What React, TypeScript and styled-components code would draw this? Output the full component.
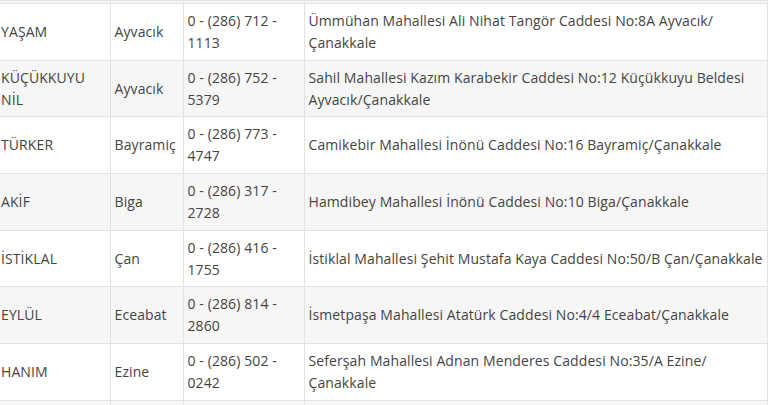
import React from "react";
import styled, { createGlobalStyle } from "styled-components";

const Global = createGlobalStyle`
  html, body { margin: 0; padding: 0; background: #fff; overflow: hidden; }
  body { width: 770px; height: 405px; }
`;

const Table = styled.table`
  width: 767px;
  border-collapse: collapse;
  table-layout: fixed;
  font-family: "Open Sans", "Noto Sans", sans-serif;
  font-size: 14px;
  letter-spacing: 0.1px;
  line-height: 22px;
  color: #444;
`;

const Row = styled.tr<{ $odd: boolean }>`
  background: ${(p) => (p.$odd ? "#f6f6f6" : "#ffffff")};
`;

const Cell = styled.td<{ $lead?: boolean }>`
  border: 1px solid #e2e2e2;
  border-left: ${(p) => (p.$lead ? "none" : "1px solid #e2e2e2")};
  padding: 5.85px 1px 5.85px ${(p) => (p.$lead ? "1px" : "4px")};
  vertical-align: middle;
  text-align: left;
  word-wrap: break-word;
`;

const StubCell = styled.td<{ $h: number; $lead?: boolean }>`
  border: 1px solid #e2e2e2;
  border-left: ${(p) => (p.$lead ? "none" : "1px solid #e2e2e2")};
  padding: 0;
  height: ${(p) => p.$h}px;
  line-height: 0;
`;

type Pharmacy = { name: string; district: string; phone: string; address: string };

const rows: Pharmacy[] = [
  { name: "YAŞAM", district: "Ayvacık", phone: "0 - (286) 712 - 1113", address: "Ümmühan Mahallesi Ali Nihat Tangör Caddesi No:8A Ayvacık/Çanakkale" },
  { name: "KÜÇÜKKUYU NİL", district: "Ayvacık", phone: "0 - (286) 752 - 5379", address: "Sahil Mahallesi Kazım Karabekir Caddesi No:12 Küçükkuyu Beldesi Ayvacık/Çanakkale" },
  { name: "TÜRKER", district: "Bayramiç", phone: "0 - (286) 773 - 4747", address: "Camikebir Mahallesi İnönü Caddesi No:16 Bayramiç/Çanakkale" },
  { name: "AKİF", district: "Biga", phone: "0 - (286) 317 - 2728", address: "Hamdibey Mahallesi İnönü Caddesi No:10 Biga/Çanakkale" },
  { name: "İSTİKLAL", district: "Çan", phone: "0 - (286) 416 - 1755", address: "İstiklal Mahallesi Şehit Mustafa Kaya Caddesi No:50/B Çan/Çanakkale" },
  { name: "EYLÜL", district: "Eceabat", phone: "0 - (286) 814 - 2860", address: "İsmetpaşa Mahallesi Atatürk Caddesi No:4/4 Eceabat/Çanakkale" },
  { name: "HANIM", district: "Ezine", phone: "0 - (286) 502 - 0242", address: "Seferşah Mahallesi Adnan Menderes Caddesi No:35/A Ezine/Çanakkale" },
];

const Stub = ({ h }: { h: number }) => (
  <Row $odd>
    <StubCell $h={h} $lead />
    <StubCell $h={h} />
    <StubCell $h={h} />
    <StubCell $h={h} />
  </Row>
);

export default function App() {
  return (
    <>
      <Global />
      <Table>
        <colgroup>
          <col style={{ width: 110 }} />
          <col style={{ width: 73 }} />
          <col style={{ width: 121 }} />
          <col style={{ width: 463 }} />
        </colgroup>
        <tbody>
          <Stub h={2} />
          {rows.map((r, i) => (
            <Row key={r.name} $odd={i % 2 === 1}>
              <Cell $lead>{r.name}</Cell>
              <Cell>{r.district}</Cell>
              <Cell>{r.phone}</Cell>
              <Cell>{r.address}</Cell>
            </Row>
          ))}
          <Stub h={10} />
        </tbody>
      </Table>
    </>
  );
}
